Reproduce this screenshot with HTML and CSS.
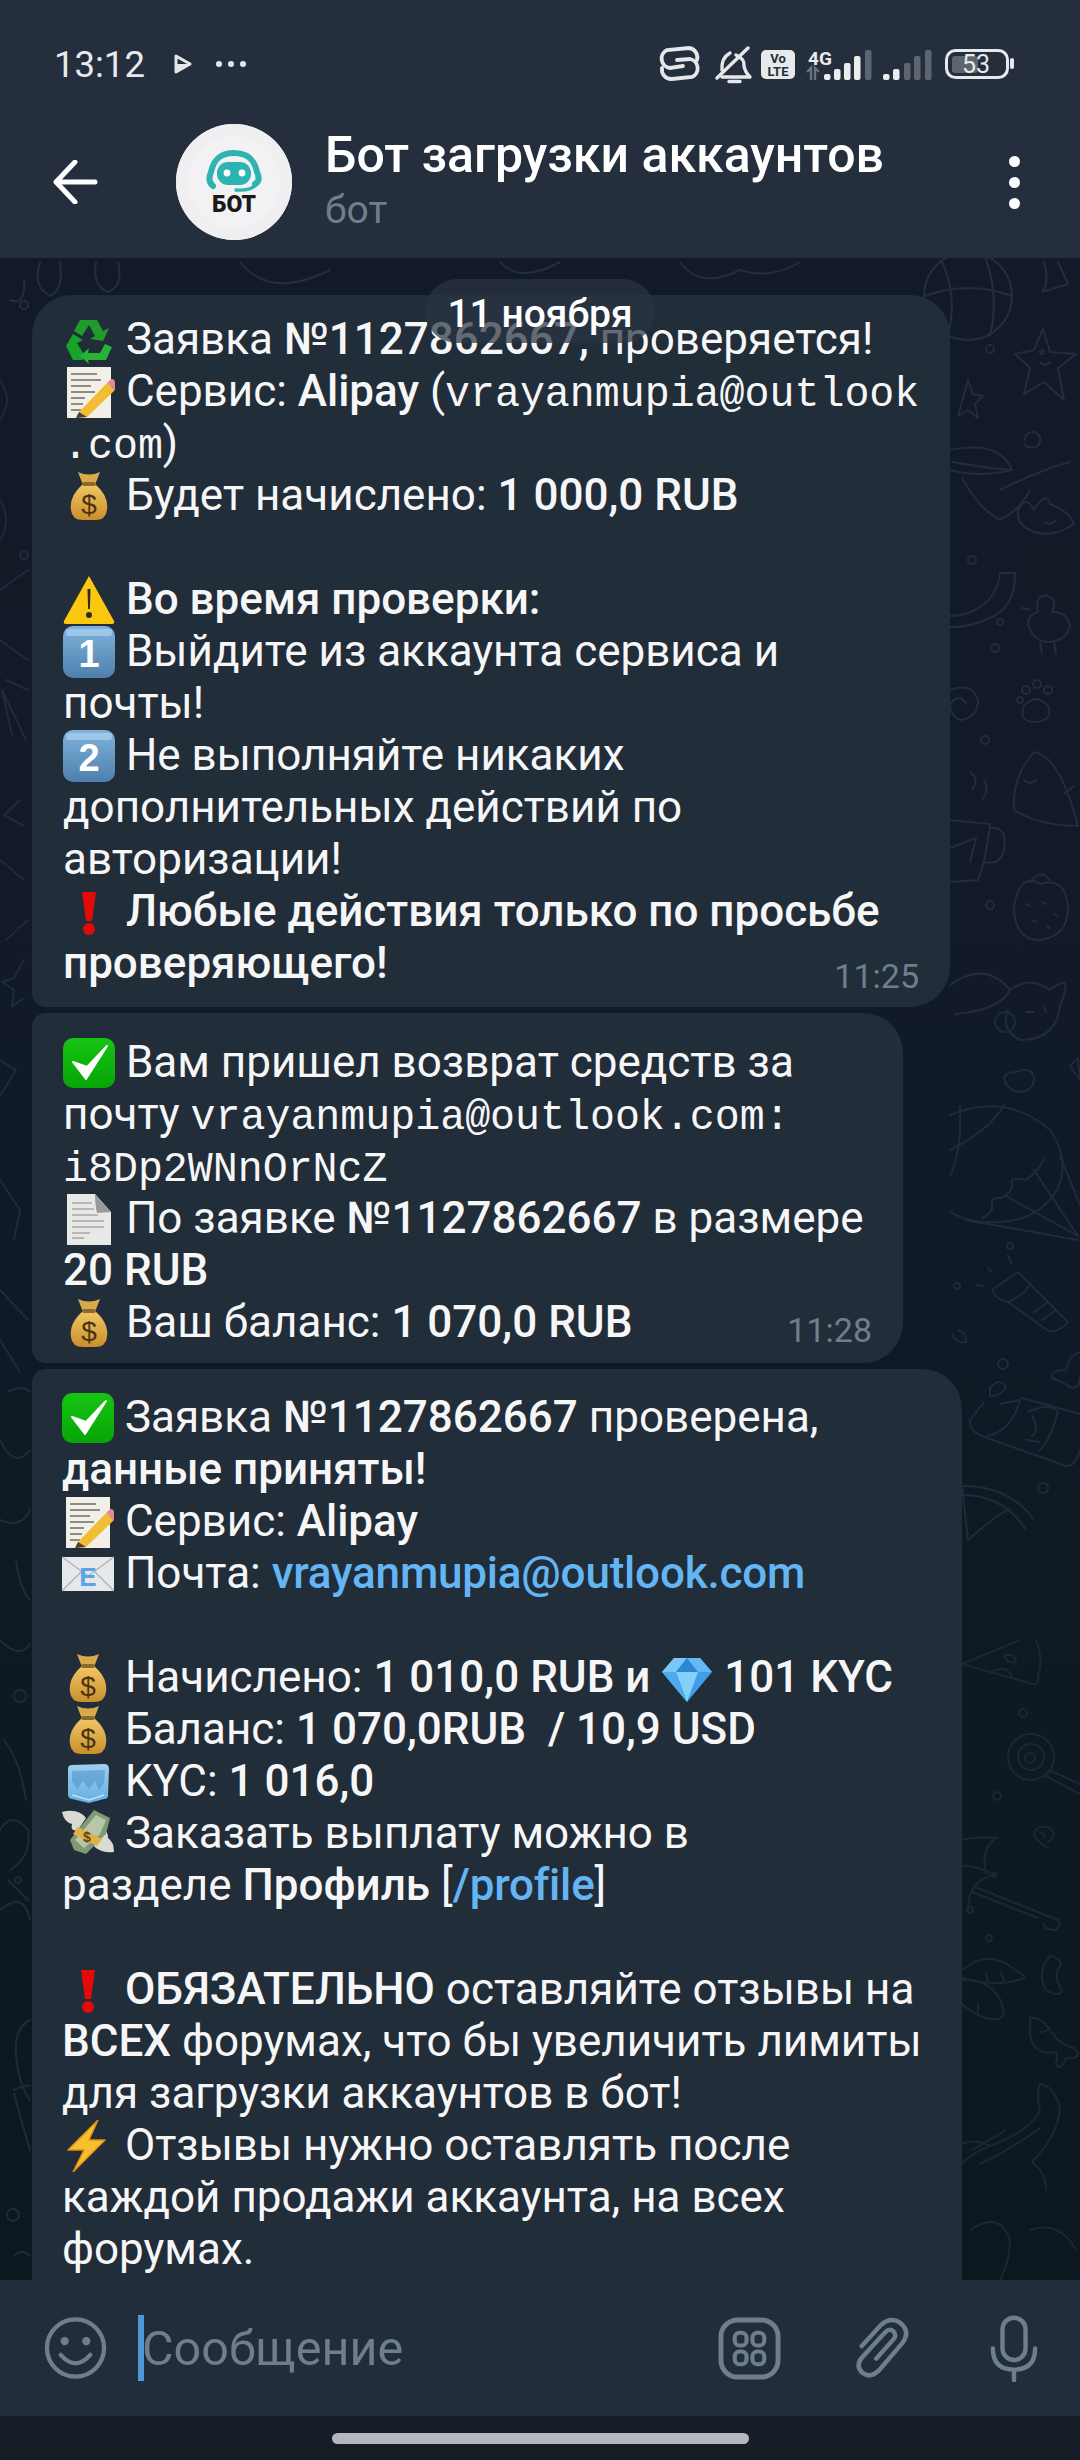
FILE: index.html
```html
<!DOCTYPE html>
<html lang="ru">

<head>
    <meta charset="UTF-8">
    <meta name="viewport" content="width=device-width, initial-scale=1.0">
    <title>Бот загрузки аккаунтов</title>
    <link rel="stylesheet" href="styles.css">
</head>

<body>
    <!-- emoji shapes, reused through <use> -->
    <svg class="defs" aria-hidden="true">
        <defs>
            <linearGradient id="g-bag" x1="0" y1="0" x2="0" y2="1">
                <stop offset="0" stop-color="#f2c765"/>
                <stop offset="1" stop-color="#c98f2c"/>
            </linearGradient>
            <linearGradient id="g-key" x1="0" y1="0" x2="0" y2="1">
                <stop offset="0" stop-color="#7fb2dd"/>
                <stop offset="1" stop-color="#4f80ad"/>
            </linearGradient>
            <linearGradient id="g-check" x1="0" y1="0" x2="0" y2="1">
                <stop offset="0" stop-color="#16c413"/>
                <stop offset="1" stop-color="#07a505"/>
            </linearGradient>
            <linearGradient id="g-ice" x1="0" y1="0" x2="0" y2="1">
                <stop offset="0" stop-color="#9fd0f0"/>
                <stop offset="1" stop-color="#63aee2"/>
            </linearGradient>
            <symbol id="e-recycle" viewBox="0 0 52 52">
                <path d="M17 6 L34 6 L40 17 L46 14 L40 27 L27 25 L32 22 L26 11 L19 22 L11 17 Z" fill="#1f9c2d"/>
                <path d="M3 32 L10 20 L20 26 L14 29 L20 39 L20 46 L10 46 Z" fill="#16a32a"/>
                <path d="M25 39 L37 39 L42 30 L49 33 L43 46 L25 46 L26 50 L17 42 L26 34 Z" fill="#27b338"/>
            </symbol>
            <symbol id="e-note" viewBox="0 0 52 52">
                <rect x="4" y="1" width="44" height="51" fill="#f2f0e6"/>
                <path d="M8 8 h26 M8 14 h30 M8 20 h20 M8 26 h24 M8 32 h14 M8 38 h12 M8 44 h10" stroke="#6b6b6b" stroke-width="1.4"/>
                <path d="M16 46 L44 17 L52 24 L24 51 L13 52 Z" fill="#f1bd33"/>
                <path d="M44 17 L47 14 Q49 12 51 14 L54 18 Q55 20 54 21 L52 24 Z" fill="#e58a92"/>
                <path d="M13 52 L16 46 L24 51 Z" fill="#4a4036"/>
            </symbol>
            <symbol id="e-bag" viewBox="0 0 52 52">
                <path d="M15 2 Q26 7 37 2 L32 15 L20 15 Z" fill="#d9a94a"/>
                <path d="M20 14 Q6 26 8 40 Q9 50 20 50 L32 50 Q43 50 44 40 Q46 26 32 14 Z" fill="url(#g-bag)"/>
                <rect x="19" y="12" width="14" height="4" rx="2" fill="#8a6a2d"/>
                <text class="emo-dollar" x="26" y="44">$</text>
            </symbol>
            <symbol id="e-warn" viewBox="0 0 52 52">
                <path d="M26 2 L51 47 Q52 50 49 50 L3 50 Q0 50 1 47 Z" fill="#fbc70f"/>
                <path d="M24.5 15 h3 l-.6 20 h-1.8 z" fill="#2c2c2c"/>
                <circle cx="26" cy="41" r="3" fill="#2c2c2c"/>
            </symbol>
            <symbol id="e-key1" viewBox="0 0 52 52">
                <rect x="0" y="0" width="52" height="52" rx="10" fill="url(#g-key)"/>
                <rect x="3" y="3" width="46" height="7" rx="3" fill="#9cc7e8"/>
                <text class="emo-digit" x="26" y="41">1</text>
            </symbol>
            <symbol id="e-key2" viewBox="0 0 52 52">
                <rect x="0" y="0" width="52" height="52" rx="10" fill="url(#g-key)"/>
                <rect x="3" y="3" width="46" height="7" rx="3" fill="#9cc7e8"/>
                <text class="emo-digit" x="26" y="41">2</text>
            </symbol>
            <symbol id="e-stop" viewBox="0 0 52 52">
                <path d="M19 6 L33 6 L29 35 L23 35 Z" fill="#e40a0a"/>
                <circle cx="26" cy="43" r="6" fill="#e40a0a"/>
            </symbol>
            <symbol id="e-check" viewBox="0 0 52 52">
                <rect x="0" y="1" width="52" height="50" rx="10" fill="url(#g-check)"/>
                <path d="M10 25 L23 42 L44 9 L24 30 Z" fill="#fff" stroke="#fff" stroke-width="2" stroke-linejoin="round"/>
            </symbol>
            <symbol id="e-doc" viewBox="0 0 52 52">
                <path d="M4 1 L32 1 L48 19 L48 52 L4 52 Z" fill="#e8e8e6"/>
                <path d="M32 1 L48 19 L34 20 Q32 12 32 1 Z" fill="#9a9a9a"/>
                <path d="M9 10 h20 M9 16 h22 M9 22 h26 M9 28 h32 M9 34 h32 M9 40 h18 M9 45 h12" stroke="#a7a7a7" stroke-width="1.4"/>
            </symbol>
            <symbol id="e-mail" viewBox="0 0 52 52">
                <rect x="0" y="9" width="52" height="34" fill="#e6e8ea"/>
                <path d="M0 9 L26 28 L52 9 M0 43 L19 24 M52 43 L33 24" fill="none" stroke="#aeb3b8" stroke-width="1.4"/>
                <text class="emo-mail" x="26" y="38">E</text>
            </symbol>
            <symbol id="e-gem" viewBox="0 0 52 52">
                <path d="M13 6 L39 6 L51 20 L26 50 L1 20 Z" fill="#3f9fe8"/>
                <path d="M13 6 L1 20 L15 20 L26 6 Z" fill="#7cc6f6"/>
                <path d="M26 6 L15 20 L37 20 Z" fill="#2a86d6"/>
                <path d="M39 6 L51 20 L37 20 L26 6 Z" fill="#66b8f2"/>
                <path d="M15 20 L26 50 L37 20 Z" fill="#84d0f8"/>
                <path d="M1 20 L15 20 L26 50 Z" fill="#4fa9ea"/>
            </symbol>
            <symbol id="e-ice" viewBox="0 0 52 52">
                <path d="M6 13 Q6 9 10 9 L42 8 Q47 8 47 13 L46 40 Q46 43 42 43 L27 47 L10 43 Q6 42 6 39 Z" fill="url(#g-ice)"/>
                <path d="M10 15 L43 14 L42 27 L37 34 L33 25 L27 33 L21 25 L15 33 L10 25 Z" fill="#4a90c8" opacity=".55"/>
                <path d="M10 39 L27 44 L42 39" fill="none" stroke="#bfe3f8" stroke-width="1.4"/>
            </symbol>
            <symbol id="e-wings" viewBox="0 0 52 52">
                <path d="M0 4 Q16 0 24 10 L16 22 Q8 24 10 16 Q2 14 0 4 Z" fill="#d9dad2"/>
                <path d="M52 44 Q38 46 30 36 L40 22 Q46 22 46 30 Q52 34 52 44 Z" fill="#d9dad2"/>
                <path d="M8 32 L32 2 L48 10 L44 26 L24 46 L12 42 Z" fill="#7f9a74"/>
                <path d="M13 32 L34 7 L44 12 L38 26 L22 40 Z" fill="#b9c7a6"/>
                <path d="M16 19 L40 31 L35 38 L11 26 Z" fill="#e0b14a"/>
                <text class="emo-wing" x="25" y="34">$</text>
            </symbol>
            <symbol id="e-bolt" viewBox="0 0 52 52">
                <path d="M36 0 L6 30 L22 30 L11 52 L43 20 L27 20 Z" fill="#f7c02e" stroke="#e08f12" stroke-width="1.4" stroke-linejoin="round"/>
            </symbol>
        </defs>
    </svg>

    <div class="app">
        <header class="topbar">
            <div class="statusbar">
                <span class="clock">13:12</span>
                <svg class="play-icon" viewBox="0 0 18 20">
                    <path d="M2 2 L16 10 L2 18 Z" fill="none" stroke="#e4e6e8" stroke-width="3" stroke-linejoin="round"/>
                    <path d="M2 10 L16 10 L2 18 Z" fill="#e4e6e8"/>
                </svg>
                <span class="more-dots"><i></i><i></i><i></i></span>
                <svg class="status-icons" viewBox="656 46 360 38">
                    <g fill="none" stroke="#e6e7e9" stroke-width="3.8" stroke-linecap="round">
                        <path d="M683 66 L670 68 A9.5 9.5 0 0 1 667 50 L689 48 A9.5 9.5 0 0 1 697 60"/>
                        <path d="M662 68 A9.5 9.5 0 0 0 672 79 L692 77 A9.5 9.5 0 0 0 690 59 L677 60"/>
                    </g>
                    <g fill="none" stroke="#e6e7e9" stroke-width="3.4" stroke-linecap="round" stroke-linejoin="round">
                        <path d="M722 70 Q721 58 730 53"/>
                        <path d="M736 55 Q745 59 744 66 Q745 72 750 77 H722"/>
                        <path d="M717 78 L748 48"/>
                        <path d="M729 81.5 H740"/>
                    </g>
                    <rect x="761" y="50" width="34" height="29" rx="5" fill="#e8e9eb"/>
                    <text class="vo-text" x="778" y="63">Vo</text>
                    <text class="vo-text" x="778" y="76">LTE</text>
                    <text class="net-text" x="808" y="65">4G</text>
                    <path d="M807 72 L811 68 V80 M815 80 V68 L819 72" fill="none" stroke="#687280" stroke-width="2.4"/>
                    <g fill="#eceded">
                        <rect x="824" y="74" width="6.5" height="6" rx="2"/>
                        <rect x="834" y="69" width="6.5" height="11" rx="2"/>
                        <rect x="844" y="63" width="6.5" height="17" rx="2"/>
                        <rect x="854" y="56" width="6.5" height="24" rx="2"/>
                        <rect x="883" y="74" width="6.5" height="6" rx="2"/>
                        <rect x="893" y="69" width="6.5" height="11" rx="2"/>
                    </g>
                    <g fill="#5d6670">
                        <rect x="865" y="50" width="6.5" height="30" rx="2"/>
                        <rect x="904" y="63" width="6.5" height="17" rx="2"/>
                        <rect x="914" y="56" width="6.5" height="24" rx="2"/>
                        <rect x="925" y="50" width="6.5" height="30" rx="2"/>
                    </g>
                    <rect x="946.5" y="50.5" width="61" height="27" rx="9" fill="none" stroke="#e8e9eb" stroke-width="3"/>
                    <rect x="952" y="56" width="26" height="17" rx="3" fill="#5d6670"/>
                    <text class="batt-text" x="976" y="73">53</text>
                    <rect x="1010" y="58" width="4" height="11" rx="2" fill="#e8e9eb"/>
                </svg>
            </div>
            <div class="toolbar">
                <svg class="back-icon" viewBox="0 0 44 44">
                    <path d="M42 22 H3 M22 2 L3 22 L22 42" fill="none" stroke="#fff" stroke-width="5" stroke-linecap="round" stroke-linejoin="round"/>
                </svg>
                <div class="avatar">
                    <svg class="avatar-logo" viewBox="0 0 116 116">
                        <path d="M37 62 Q31 57 35 48 C38 34 46 29 58 29 C70 29 78 34 81 48 Q85 57 79 60" fill="none" stroke="#2eb3b3" stroke-width="6" stroke-linecap="round"/>
                        <rect x="41" y="38" width="34" height="23" rx="11" fill="#2eb3b3"/>
                        <circle cx="51" cy="49" r="3.4" fill="#fff"/>
                        <circle cx="66" cy="49" r="3.4" fill="#fff"/>
                        <path d="M80 60 Q77 67 60 66" fill="none" stroke="#2eb3b3" stroke-width="3.4" stroke-linecap="round"/>
                    </svg>
                    <span class="avatar-text">БОТ</span>
                </div>
                <div class="chat-title">
                    <div class="chat-name">Бот загрузки аккаунтов</div>
                    <div class="chat-sub">бот</div>
                </div>
                <span class="menu-dots"><i></i><i></i><i></i></span>
            </div>
        </header>

        <main class="chat">
            <svg class="doodles" viewBox="0 258 1080 2022">
                <g fill="none" stroke-width="2" stroke-linecap="round" stroke-linejoin="round">
                    <!-- top strip -->
                    <g stroke="#232d3d">
                        <circle cx="968" cy="296" r="44"/>
                        <path d="M942 262 Q958 296 948 334 M984 254 Q1000 294 990 336 M925 296 Q968 280 1012 296"/>
                        <path d="M1044 262 Q1050 282 1042 292 L1068 284 L1058 262"/>
                        <path d="M60 262 Q64 290 50 296 Q32 286 40 262 M118 262 Q124 286 108 292 Q92 286 96 262 M240 262 Q270 300 330 270 M500 262 Q520 284 560 262 M680 262 Q700 290 740 270 Q770 280 800 262"/>
                        <path d="M10 300 Q26 306 24 280"/>
                        <circle cx="24" cy="305" r="4"/>
                    </g>
                    <!-- right column, upper -->
                    <g stroke="#222c3b">
                        <path d="M1043 329 L1050 352 L1076 354 L1058 368 L1064 400 L1044 382 L1024 394 L1030 368 L1015 354 L1034 350 Z"/>
                        <path d="M1040 362 Q1044 368 1050 362"/>
                        <circle cx="1042" cy="352" r="2"/>
                        <path d="M968 380 L973 394 L983 396 L975 404 L978 418 L968 410 L958 416 Z"/>
                        <circle cx="990" cy="349" r="4"/>
                        <path d="M1025 440 Q1025 432 1034 432 Q1044 436 1038 446 Q1028 450 1024 444"/>
                        <path d="M950 450 Q1000 440 1012 470 Q980 478 950 470 M952 462 Q1000 470 1012 470 M962 478 Q980 510 1000 520 Q1020 510 1030 490 M1000 490 Q1040 470 1070 462"/>
                        <path d="M1018 510 Q1026 494 1034 510 Q1046 490 1050 504 Q1070 512 1074 524 Q1050 540 1030 530 Q1016 524 1018 510 Z"/>
                        <path d="M1044 522 Q1050 526 1056 520"/>
                        <circle cx="972" cy="560" r="4"/>
                        <path d="M1000 573 L1015 573 Q1016 610 985 620 Q965 628 950 627 M1000 573 Q998 598 975 610 Q962 616 950 616"/>
                        <circle cx="1000" cy="622" r="3"/>
                        <circle cx="995" cy="648" r="4"/>
                        <path d="M1038 612 Q1034 594 1048 596 Q1058 600 1052 612 Q1068 612 1070 626 Q1066 642 1046 642 Q1030 638 1028 622 Q1030 614 1038 612 Z M1040 642 L1042 654 M1054 642 L1056 654 M1030 610 L1022 608"/>
                        <path d="M950 690 Q972 682 978 700 Q978 718 960 720 Q950 716 950 704 M950 704 Q960 692 966 704"/>
                        <path d="M1024 706 Q1036 692 1048 706 Q1054 720 1036 722 Q1018 722 1024 706 Z"/>
                        <circle cx="1026" cy="690" r="4"/><circle cx="1037" cy="684" r="4"/><circle cx="1048" cy="690" r="4"/><circle cx="1020" cy="700" r="3"/>
                        <circle cx="985" cy="740" r="4"/>
                        <path d="M1034 752 Q1060 756 1078 826 Q1040 826 1014 810 Q1012 776 1034 752 Z"/>
                        <path d="M1024 780 Q1030 786 1036 780 M1064 794 L1074 786"/>
                        <path d="M970 772 Q980 780 972 790 M984 780 Q990 790 982 800"/>
                        <path d="M950 820 L990 824 Q986 860 978 880 L950 882 M990 828 Q1008 826 1004 850 Q1000 866 984 862"/>
                        <path d="M950 848 L976 838 L970 862"/>
                        <circle cx="990" cy="905" r="4"/>
                        <path d="M1040 884 Q1020 872 1014 906 Q1014 940 1040 940 Q1068 936 1068 908 Q1066 876 1040 884 Z"/>
                        <path d="M1030 882 Q1040 868 1050 880 M1026 904 l4 2 M1042 902 l4 2 M1054 914 l4 2 M1032 920 l4 2 M1046 926 l4 2"/>
                        <path d="M950 985 Q985 960 1010 990 Q1000 1010 955 1014"/>
                        <path d="M1010 990 Q1030 975 1050 990 Q1075 970 1060 1006 Q1056 1040 1020 1040 Q1000 1030 1008 1010"/>
                        <path d="M1026 1012 h8 M1044 1006 l2 6"/>
                    </g>
                    <!-- right column, balloon and below -->
                    <g stroke="#1f2b3a">
                        <circle cx="1005" cy="1022" r="10"/>
                        <path d="M1016 1072 Q1032 1066 1034 1078 Q1034 1090 1020 1092 Q1006 1090 1004 1078 Q1006 1072 1016 1072"/>
                        <path d="M1070 1066 L1078 1058 L1080 1080 Z"/>
                        <path d="M950 1115 Q1006 1092 1050 1130 Q1070 1158 1058 1188 Q1040 1220 1000 1222 Q970 1224 950 1212"/>
                        <path d="M1004 1105 Q990 1130 950 1150 M960 1106 Q962 1150 950 1176"/>
                        <path d="M1044 1158 Q1040 1170 1026 1180 Q1010 1176 1012 1184 Q1014 1190 1002 1198 Q990 1196 992 1206 Q994 1212 982 1218"/>
                        <path d="M965 1220 L1078 1240 M1060 1156 L1080 1205 M1034 1170 L1078 1236 M1006 1196 L1078 1236"/>
                        <circle cx="1010" cy="1246" r="3"/>
                        <path d="M1008 1256 L1012 1264 M988 1268 L992 1272 M976 1285 L984 1286"/>
                        <circle cx="957" cy="1286" r="3"/>
                        <path d="M992 1290 L1018 1272 L1030 1284 Q1026 1294 1008 1302 Q996 1300 992 1290 Z M1008 1302 L1050 1332 Q1062 1330 1068 1322 L1030 1284 M1034 1312 L1048 1302 M1042 1320 L1056 1310"/>
                        <path d="M958 1330 Q966 1332 966 1342 Q956 1344 952 1334"/>
                        <circle cx="1003" cy="1364" r="5"/>
                        <path d="M1080 1352 Q1068 1356 1066 1370 Q1050 1370 1052 1378 Q1066 1384 1068 1386 Q1080 1392 1080 1376"/>
                        <path d="M984 1402 L970 1420 Q968 1430 982 1436 L1066 1466 Q1076 1466 1080 1450 M1022 1398 L1080 1414 M1000 1404 L1020 1400 Q1012 1430 988 1436"/>
                        <path d="M1028 1412 Q1050 1402 1058 1412 Q1050 1440 1040 1450 M1032 1416 Q1040 1430 1032 1436 M1026 1440 L1040 1442"/>
                        <path d="M990 1388 Q1000 1376 1006 1388 Q1000 1396 990 1396 Z"/>
                        <circle cx="1043" cy="1488" r="5"/>
                        <path d="M962 1486 Q1010 1486 1034 1520 M962 1495 Q1004 1495 1026 1530"/>
                        <path d="M962 1486 L968 1540 M968 1540 Q990 1520 1010 1508"/>
                    </g>
                    <!-- right column, lower -->
                    <g stroke="#1b2733">
                        <path d="M962 1664 L1020 1640 M962 1664 L1026 1682 Q1040 1688 1038 1676 Q1044 1660 1036 1640"/>
                        <path d="M1004 1656 Q1014 1652 1016 1662 Q1008 1664 1004 1656 Z M992 1672 Q1008 1664 1012 1678"/>
                        <circle cx="1023" cy="1713" r="4"/>
                        <circle cx="1031" cy="1757" r="23"/>
                        <circle cx="1031" cy="1757" r="13"/>
                        <circle cx="1030" cy="1758" r="5"/>
                        <path d="M1049 1770 L1080 1784 M1046 1776 L1080 1794"/>
                        <circle cx="997" cy="1796" r="4"/>
                        <path d="M1048 1848 Q1034 1840 1034 1832 Q1040 1824 1050 1828 Q1058 1836 1048 1842 M1040 1832 Q1046 1834 1044 1838"/>
                        <path d="M962 1840 Q976 1836 996 1838 Q980 1850 986 1874 M962 1866 Q980 1866 994 1875 Q968 1880 968 1910"/>
                        <circle cx="994" cy="1875" r="2"/>
                        <circle cx="970" cy="1910" r="3"/>
                        <path d="M975 1887 L1058 1920 Q1062 1926 1056 1930 Q1044 1930 1044 1924 M972 1892 L1038 1918"/>
                        <circle cx="989" cy="1938" r="3"/>
                        <path d="M1050 1956 Q1062 1958 1060 1966 Q1052 1976 1062 1990 Q1060 1998 1046 1990 Q1036 1972 1050 1956 Z"/>
                        <path d="M962 1970 Q990 1948 1015 1970 Q1026 1976 1024 1978 Q1000 1988 962 1978 M962 1980 Q1000 1980 1004 2014 Q1000 2022 986 2018 Q970 2012 962 2004"/>
                        <path d="M988 1982 l-2 -8 M1004 1980 l-4 -8 M978 2012 l0 -8"/>
                        <path d="M1030 2018 Q1040 2016 1050 2030 Q1060 2046 1074 2048 Q1082 2054 1074 2058 L1066 2058 Q1060 2072 1056 2064 Q1058 2056 1056 2052 Q1030 2056 1030 2030 Z"/>
                        <path d="M1040 2032 Q1046 2032 1050 2028"/>
                        <path d="M1040 2084 Q1054 2086 1060 2108 Q1058 2136 1032 2162 L1040 2170 Q1046 2180 1046 2190 M1040 2084 Q1036 2092 1040 2110 Q1032 2130 990 2146 Q962 2156 950 2180 M1040 2128 Q1010 2150 980 2164 M1006 2130 Q990 2140 972 2150"/>
                        <path d="M962 2144 Q975 2138 990 2146"/>
                        <path d="M970 2230 Q1000 2210 1010 2240 Q1010 2260 1000 2280 M1030 2230 Q1060 2220 1076 2250"/>
                    </g>
                    <!-- left column -->
                    <g stroke="#1f2b3a">
                        <path d="M0 380 Q14 400 0 420 M0 500 Q12 520 0 540"/>
                        <circle cx="24" cy="555" r="4"/>
                        <path d="M0 590 L28 570 M0 640 Q14 650 28 660 M6 680 L28 690 M2 690 L26 740 M2 690 L12 735"/>
                        <path d="M20 800 L4 815 L24 826 M0 860 L24 880 M6 940 L28 920"/>
                        <path d="M24 960 L14 978 L2 982 L14 990 L12 1006 L24 998"/>
                        <path d="M0 1060 L16 1070 L0 1096 M0 1180 L20 1210 L14 1240"/>
                        <path d="M0 1290 L28 1320 M0 1340 L20 1372 M8 1392 Q24 1384 30 1392"/>
                        <path d="M0 1440 Q14 1470 30 1450 M0 1520 Q20 1530 30 1510 M16 1560 Q20 1590 30 1600 M0 1640 Q20 1660 30 1644"/>
                        <circle cx="20" cy="1696" r="6"/>
                        <path d="M4 1740 Q20 1760 26 1800 M0 1830 Q12 1810 28 1830 Q32 1856 10 1870 M8 1880 L28 1900 M0 1910 Q24 1890 30 1920"/>
                        <circle cx="18" cy="1880" r="3"/>
                        <path d="M30 2020 Q10 2030 18 2070 Q22 2090 30 2100 M14 2090 Q26 2084 30 2086 M14 2094 Q24 2130 30 2150"/>
                        <circle cx="13" cy="2215" r="6"/>
                        <path d="M14 2256 Q22 2248 30 2256"/>
                    </g>
                </g>
            </svg>

            <div class="date-pill">11 ноября</div>

            <div class="bubble bubble-first">
                <svg class="emo"><use href="#e-recycle"/></svg> Заявка <b>№1127862667,</b> проверяется!<br>
                <svg class="emo"><use href="#e-note"/></svg> Сервис: <b>Alipay</b> (<code>vrayanmupia@outlook<br>.com</code>)<br>
                <svg class="emo"><use href="#e-bag"/></svg> Будет начислено: <b>1 000,0 RUB</b><br>
                <br>
                <svg class="emo"><use href="#e-warn"/></svg> <b>Во время проверки:</b><br>
                <svg class="emo"><use href="#e-key1"/></svg> Выйдите из аккаунта сервиса и<br>
                почты!<br>
                <svg class="emo"><use href="#e-key2"/></svg> Не выполняйте никаких<br>
                дополнительных действий по<br>
                авторизации!<br>
                <svg class="emo"><use href="#e-stop"/></svg> <b>Любые действия только по просьбе<br>
                проверяющего!</b>
                <span class="msg-time">11:25</span>
            </div>

            <div class="bubble bubble-second">
                <svg class="emo"><use href="#e-check"/></svg> Вам пришел возврат средств за<br>
                почту <code>vrayanmupia@outlook.com:<br>
                i8Dp2WNnOrNcZ</code><br>
                <svg class="emo"><use href="#e-doc"/></svg> По заявке <b>№1127862667</b> в размере<br>
                <b>20 RUB</b><br>
                <svg class="emo"><use href="#e-bag"/></svg> Ваш баланс: <b>1 070,0 RUB</b>
                <span class="msg-time">11:28</span>
            </div>

            <div class="bubble bubble-third">
                <svg class="emo"><use href="#e-check"/></svg> Заявка <b>№1127862667</b> проверена,<br>
                <b>данные приняты!</b><br>
                <svg class="emo"><use href="#e-note"/></svg> Сервис: <b>Alipay</b><br>
                <svg class="emo"><use href="#e-mail"/></svg> Почта: <a class="link">vrayanmupia@outlook.com</a><br>
                <br>
                <svg class="emo"><use href="#e-bag"/></svg> Начислено: <b>1 010,0 RUB и</b> <svg class="emo"><use href="#e-gem"/></svg> <b>101 KYC</b><br>
                <svg class="emo"><use href="#e-bag"/></svg> Баланс: <b>1 070,0RUB &nbsp;/ 10,9 USD</b><br>
                <svg class="emo"><use href="#e-ice"/></svg> KYC: <b>1 016,0</b><br>
                <svg class="emo"><use href="#e-wings"/></svg> Заказать выплату можно в<br>
                разделе <b>Профиль</b> [<a class="link">/profile</a>]<br>
                <br>
                <svg class="emo"><use href="#e-stop"/></svg> <b>ОБЯЗАТЕЛЬНО</b> оставляйте отзывы на<br>
                <b>ВСЕХ</b> форумах, что бы увеличить лимиты<br>
                для загрузки аккаунтов в бот!<br>
                <svg class="emo"><use href="#e-bolt"/></svg> Отзывы нужно оставлять после<br>
                каждой продажи аккаунта, на всех<br>
                форумах.<br>
                <br>
                <br>
            </div>
        </main>

        <footer class="inputbar">
            <svg class="icon-smile" viewBox="0 0 64 64">
                <circle cx="32" cy="32" r="29" fill="none" stroke="#6f7e8d" stroke-width="4.4"/>
                <circle cx="21" cy="25" r="4.2" fill="#6f7e8d"/>
                <circle cx="43" cy="25" r="4.2" fill="#6f7e8d"/>
                <path d="M17 39 Q32 56 47 39" fill="none" stroke="#6f7e8d" stroke-width="4.4" stroke-linecap="round"/>
            </svg>
            <span class="cursor"></span>
            <span class="placeholder">Сообщение</span>
            <svg class="icon-bot" viewBox="0 0 64 64">
                <rect x="3" y="3" width="58" height="58" rx="17" fill="none" stroke="#6f7e8d" stroke-width="5"/>
                <g fill="none" stroke="#6f7e8d" stroke-width="4.2">
                    <rect x="17" y="16" width="12" height="13" rx="5"/>
                    <rect x="35" y="16" width="12" height="13" rx="5"/>
                    <rect x="17" y="35" width="12" height="13" rx="5"/>
                    <rect x="35" y="35" width="12" height="13" rx="5"/>
                </g>
            </svg>
            <svg class="icon-clip" viewBox="0 0 56 64">
                <path d="M6 30 L26 8 Q36 -1 46 6 Q57 15 48 27 L24 55 Q15 64 7 58 Q-1 51 6 42 L30 16 Q35 11 39 15 Q43 19 38 24 L21 43" fill="none" stroke="#6f7e8d" stroke-width="4.6" stroke-linecap="round"/>
            </svg>
            <svg class="icon-mic" viewBox="0 0 50 68">
                <rect x="13" y="2" width="24" height="44" rx="12" fill="none" stroke="#6f7e8d" stroke-width="4.6"/>
                <path d="M3 34 Q3 56 25 56 Q47 56 47 34 M25 56 V67" fill="none" stroke="#6f7e8d" stroke-width="4.6" stroke-linecap="round"/>
            </svg>
        </footer>

        <div class="navbar"><span class="nav-pill"></span></div>
    </div>
</body>

</html>
```

FILE: styles.css
```css
* {
    box-sizing: border-box;
}

body {
    margin: 0;
    background-color: #171d27;
    font-family: Roboto, "Noto Sans", sans-serif;
    color: #f6f6f7;
}

.defs {
    position: absolute;
    width: 0;
    height: 0;
}

.app {
    width: 1080px;
    height: 2460px;
    display: flex;
    flex-direction: column;
    overflow: hidden;
}

/* header */

.topbar {
    height: 258px;
    flex: none;
    background-color: #242e3c;
}

.statusbar {
    height: 106px;
    padding: 46px 0 0 54px;
    display: flex;
    align-items: flex-start;
}

.clock {
    font-size: 36.5px;
    line-height: 38px;
    color: #e8e9eb;
}

.play-icon {
    width: 18px;
    height: 20px;
    margin: 8px 0 0 29px;
}

.more-dots {
    display: flex;
    gap: 6px;
    margin: 15px 0 0 24px;
}

.more-dots i {
    width: 6px;
    height: 6px;
    border-radius: 50%;
    background-color: #e4e6e8;
}

.status-icons {
    width: 360px;
    height: 38px;
    margin-left: auto;
    margin-right: 64px;
}

.vo-text {
    font-size: 13px;
    font-weight: 700;
    fill: #242e3c;
    text-anchor: middle;
}

.net-text {
    font-size: 19px;
    font-weight: 700;
    fill: #e8e9eb;
}

.batt-text {
    font-size: 25px;
    fill: #e8e9eb;
    text-anchor: middle;
}

.toolbar {
    height: 152px;
    padding-left: 52px;
    display: flex;
    align-items: center;
}

.back-icon {
    width: 46px;
    height: 44px;
    flex: none;
}

.avatar {
    width: 116px;
    height: 116px;
    margin-left: 78px;
    flex: none;
    position: relative;
    border-radius: 50%;
    background-color: #f2f2f4;
    box-shadow: inset 0 0 0 12px #efeff1;
}

.avatar-logo {
    display: block;
    width: 116px;
    height: 116px;
}

.avatar-text {
    position: absolute;
    left: 0;
    right: 0;
    top: 69px;
    text-align: center;
    font-size: 23px;
    line-height: 24px;
    font-weight: 900;
    color: #1a1a1a;
}

.chat-title {
    margin-left: 33px;
    flex: 1;
}

.chat-name {
    font-size: 50px;
    line-height: 52px;
    font-weight: 500;
    color: #fff;
    margin-top: -2px;
}

.chat-sub {
    font-size: 39px;
    line-height: 46px;
    margin-top: 6px;
    color: #6f7e8d;
}

.menu-dots {
    display: flex;
    flex-direction: column;
    gap: 10px;
    margin-right: 60px;
}

.menu-dots i {
    width: 11px;
    height: 11px;
    border-radius: 50%;
    background-color: #fff;
}

/* messages */

.chat {
    flex: 1;
    min-height: 0;
    position: relative;
    overflow: hidden;
    padding: 37px 0 0 32px;
    background: linear-gradient(180deg, #131a27 0%, #101a26 50%, #0d1720 100%);
}

.doodles {
    position: absolute;
    left: 0;
    top: 0;
    width: 1080px;
    height: 2022px;
}

.date-pill {
    position: absolute;
    left: 425px;
    top: 21px;
    width: 230px;
    height: 64px;
    z-index: 2;
    text-align: center;
    font-size: 39px;
    line-height: 70px;
    font-weight: 500;
    color: #fff;
    border-radius: 32px;
    background-color: rgba(42, 52, 66, 0.72);
}

.bubble {
    position: relative;
    margin-bottom: 6px;
    padding: 23px 0 15px 31px;
    font-size: 44px;
    line-height: 52px;
    white-space: nowrap;
    border-radius: 14px 40px 40px 14px;
    background-color: #222d3a;
}

.bubble-first {
    width: 918px;
    padding-top: 18px;
    padding-bottom: 18px;
    border-top-left-radius: 40px;
}

.bubble-first .msg-time {
    bottom: 14px;
}

.bubble-second {
    width: 871px;
}

.bubble-third {
    width: 930px;
    padding-top: 22px;
    padding-left: 30px;
    border-bottom-left-radius: 0;
    border-bottom-right-radius: 0;
}

.bubble b {
    font-weight: 500;
}

.bubble code {
    font-family: "Liberation Mono", monospace;
    font-size: 41.6px;
    line-height: 0;
}

.link {
    font-weight: 500;
    letter-spacing: -0.2px;
    color: #64b5f3;
}

/* negative margins keep the 52px icon from stretching the line box */
.emo {
    display: inline-block;
    width: 52px;
    height: 52px;
    margin: -6px 0;
    vertical-align: -6px;
}

.emo-dollar {
    font-family: "Liberation Sans", sans-serif;
    font-size: 28px;
    fill: #4a3410;
    text-anchor: middle;
}

.emo-digit {
    font-family: "Liberation Sans", sans-serif;
    font-size: 38px;
    font-weight: 700;
    fill: #fff;
    text-anchor: middle;
}

.emo-mail {
    font-family: "Liberation Sans", sans-serif;
    font-size: 26px;
    font-weight: 700;
    fill: #5aa5e8;
    text-anchor: middle;
}

.emo-wing {
    font-family: "Liberation Sans", sans-serif;
    font-size: 14px;
    font-weight: 700;
    fill: #5d4510;
    text-anchor: middle;
}

.msg-time {
    position: absolute;
    right: 31px;
    bottom: 16px;
    font-size: 34px;
    line-height: 34px;
    color: #6f7e8d;
}

/* input */

.inputbar {
    height: 136px;
    flex: none;
    padding-left: 44px;
    display: flex;
    align-items: center;
    background-color: #222d3b;
}

.icon-smile {
    width: 63px;
    height: 64px;
    flex: none;
}

.cursor {
    width: 6px;
    height: 66px;
    margin-left: 31px;
    flex: none;
    background-color: #4f96d8;
}

.placeholder {
    width: 574px;
    flex: none;
    font-size: 48.5px;
    color: #6f7e8d;
    text-indent: -2px;
}

.icon-bot {
    width: 63px;
    height: 63px;
    flex: none;
}

.icon-clip {
    width: 54px;
    height: 62px;
    margin-left: 75px;
    flex: none;
}

.icon-mic {
    width: 48px;
    height: 67px;
    margin-left: 80px;
    flex: none;
}

.navbar {
    height: 44px;
    flex: none;
    display: flex;
    justify-content: center;
    padding-top: 17px;
    background-color: #171d27;
}

.nav-pill {
    width: 417px;
    height: 11px;
    border-radius: 6px;
    background-color: #b4b8bc;
}
```
